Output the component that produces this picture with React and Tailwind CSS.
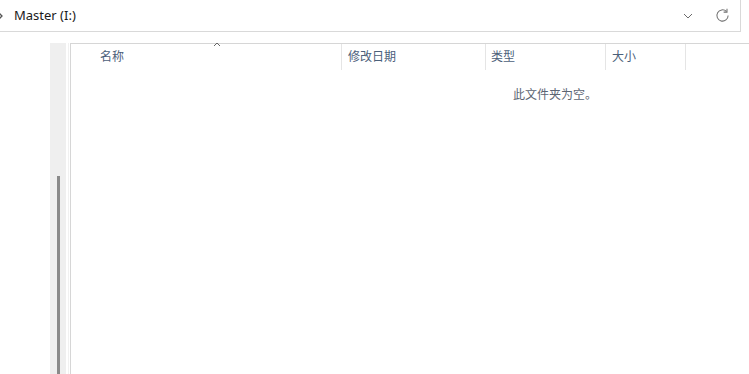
import React from 'react'

const columns = [
  { label: '名称', width: 'w-[271px]', pad: 'pl-[29px]' },
  { label: '修改日期', width: 'w-[144px]', pad: 'pl-[6px]' },
  { label: '类型', width: 'w-[120px]', pad: 'pl-[5px]' },
  { label: '大小', width: 'w-[80px]', pad: 'pl-[6px]' },
]

const App = () => {
  return (
    <div className="flex h-[374px] w-[749px] flex-col overflow-hidden bg-white font-['Noto_Sans','Noto_Sans_CJK_SC',sans-serif]">
      {/* address bar */}
      <div className="flex h-[32px] w-[741px] shrink-0 items-center border-b border-r border-[#d9d9d9]">
        <svg width="6" height="8" viewBox="0 0 6 8" className="ml-[-2px] shrink-0">
          <path d="M1 1 L4 4 L1 7" fill="none" stroke="#555" strokeWidth="1.3" />
        </svg>
        <span className="ml-[10px] text-[13px] leading-none text-[#1b1b1b]">Master (I:)</span>
        <div className="flex-1" />
        <svg width="10" height="6" viewBox="0 0 10 6" className="mr-[22px]">
          <path d="M1 1 L5 5 L9 1" fill="none" stroke="#6b6b6b" strokeWidth="1" />
        </svg>
        <svg width="15" height="15" viewBox="0 0 16 16" className="mr-[10px]">
          <path d="M14 8 A6 6 0 1 1 12.2 3.7" fill="none" stroke="#707070" strokeWidth="1.1" />
          <path d="M12.8 0.8 L12.8 4.4 L9.2 4.4" fill="none" stroke="#707070" strokeWidth="1.1" />
        </svg>
      </div>

      <div className="mt-[11px] flex flex-1">
        <div className="w-[50px] shrink-0" />
        {/* nav pane scrollbar */}
        <div className="flex w-[16px] shrink-0 flex-col bg-[#efefef]">
          <div className="h-[133px] shrink-0" />
          <div className="ml-[7px] w-[3px] flex-1 bg-[#8a8a8a]" />
        </div>
        <div className="w-[2px] shrink-0" />
        <div className="w-px shrink-0 bg-[#f1f1f1]" />
        <div className="w-px shrink-0" />

        {/* file list */}
        <div className="flex flex-1 flex-col border-l border-t border-[#d6d6d6]">
          <div className="flex h-[26px] shrink-0 text-[12px] text-[#4c607a]">
            {columns.map((col, i) => (
              <div
                key={col.label}
                className={`relative flex h-[26px] items-center border-r border-[#e5e5e5] ${col.width} ${col.pad}`}
              >
                {i === 0 && (
                  <svg width="8" height="5" viewBox="0 0 8 5" className="absolute left-[142px] top-[-2px]">
                    <path d="M1 4 L4 1 L7 4" fill="none" stroke="#666" strokeWidth="1" />
                  </svg>
                )}
                <span className="leading-none">{col.label}</span>
              </div>
            ))}
          </div>
          <div className="pl-[442px] pt-[17px] text-[12px] leading-[16px] text-[#5c6573]">此文件夹为空。</div>
        </div>
      </div>
    </div>
  )
}

export default App
